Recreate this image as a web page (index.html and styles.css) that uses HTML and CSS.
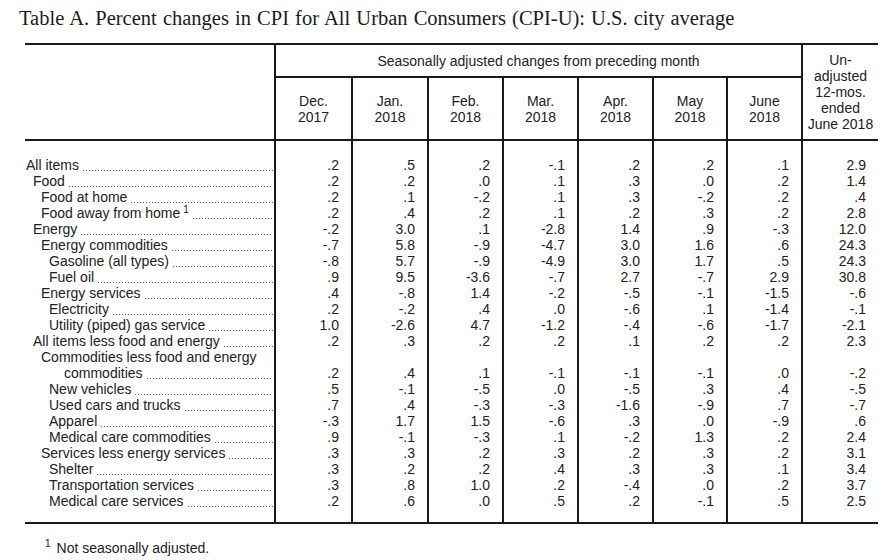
FILE: index.html
```html
<!DOCTYPE html>
<html lang="en">
<head>
<meta charset="utf-8">
<title>Table A. Percent changes in CPI</title>
<link rel="stylesheet" href="styles.css">
</head>
<body>
<div class="page">
  <h1 class="title">Table A. Percent changes in CPI for All Urban Consumers (CPI-U): U.S. city average</h1>

  <div class="cpi">
    <div class="head">
      <div class="h-stub"></div>
      <div class="h-group">Seasonally adjusted changes from preceding month</div>
      <div class="h-unadj">Un-<br>adjusted<br>12-mos.<br>ended<br>June 2018</div>
      <div class="h-mo">Dec.<br>2017</div>
      <div class="h-mo">Jan.<br>2018</div>
      <div class="h-mo">Feb.<br>2018</div>
      <div class="h-mo">Mar.<br>2018</div>
      <div class="h-mo">Apr.<br>2018</div>
      <div class="h-mo">May<br>2018</div>
      <div class="h-mo">June<br>2018</div>
    </div>

    <div class="row first">
      <div class="stub l0"><span>All items</span><i class="lead"></i></div>
      <div class="num">.2</div><div class="num">.5</div><div class="num">.2</div><div class="num">-.1</div><div class="num">.2</div><div class="num">.2</div><div class="num">.1</div><div class="num">2.9</div>
    </div>
    <div class="row">
      <div class="stub l1"><span>Food</span><i class="lead"></i></div>
      <div class="num">.2</div><div class="num">.2</div><div class="num">.0</div><div class="num">.1</div><div class="num">.3</div><div class="num">.0</div><div class="num">.2</div><div class="num">1.4</div>
    </div>
    <div class="row">
      <div class="stub l2"><span>Food at home</span><i class="lead"></i></div>
      <div class="num">.2</div><div class="num">.1</div><div class="num">-.2</div><div class="num">.1</div><div class="num">.3</div><div class="num">-.2</div><div class="num">.2</div><div class="num">.4</div>
    </div>
    <div class="row">
      <div class="stub l2"><span>Food away from home<sup class="fn">1</sup></span><i class="lead"></i></div>
      <div class="num">.2</div><div class="num">.4</div><div class="num">.2</div><div class="num">.1</div><div class="num">.2</div><div class="num">.3</div><div class="num">.2</div><div class="num">2.8</div>
    </div>
    <div class="row">
      <div class="stub l1"><span>Energy</span><i class="lead"></i></div>
      <div class="num">-.2</div><div class="num">3.0</div><div class="num">.1</div><div class="num">-2.8</div><div class="num">1.4</div><div class="num">.9</div><div class="num">-.3</div><div class="num">12.0</div>
    </div>
    <div class="row">
      <div class="stub l2"><span>Energy commodities</span><i class="lead"></i></div>
      <div class="num">-.7</div><div class="num">5.8</div><div class="num">-.9</div><div class="num">-4.7</div><div class="num">3.0</div><div class="num">1.6</div><div class="num">.6</div><div class="num">24.3</div>
    </div>
    <div class="row">
      <div class="stub l3"><span>Gasoline (all types)</span><i class="lead"></i></div>
      <div class="num">-.8</div><div class="num">5.7</div><div class="num">-.9</div><div class="num">-4.9</div><div class="num">3.0</div><div class="num">1.7</div><div class="num">.5</div><div class="num">24.3</div>
    </div>
    <div class="row">
      <div class="stub l3"><span>Fuel oil</span><i class="lead"></i></div>
      <div class="num">.9</div><div class="num">9.5</div><div class="num">-3.6</div><div class="num">-.7</div><div class="num">2.7</div><div class="num">-.7</div><div class="num">2.9</div><div class="num">30.8</div>
    </div>
    <div class="row">
      <div class="stub l2"><span>Energy services</span><i class="lead"></i></div>
      <div class="num">.4</div><div class="num">-.8</div><div class="num">1.4</div><div class="num">-.2</div><div class="num">-.5</div><div class="num">-.1</div><div class="num">-1.5</div><div class="num">-.6</div>
    </div>
    <div class="row">
      <div class="stub l3"><span>Electricity</span><i class="lead"></i></div>
      <div class="num">.2</div><div class="num">-.2</div><div class="num">.4</div><div class="num">.0</div><div class="num">-.6</div><div class="num">.1</div><div class="num">-1.4</div><div class="num">-.1</div>
    </div>
    <div class="row">
      <div class="stub l3"><span>Utility (piped) gas service</span><i class="lead"></i></div>
      <div class="num">1.0</div><div class="num">-2.6</div><div class="num">4.7</div><div class="num">-1.2</div><div class="num">-.4</div><div class="num">-.6</div><div class="num">-1.7</div><div class="num">-2.1</div>
    </div>
    <div class="row">
      <div class="stub l1"><span>All items less food and energy</span><i class="lead"></i></div>
      <div class="num">.2</div><div class="num">.3</div><div class="num">.2</div><div class="num">.2</div><div class="num">.1</div><div class="num">.2</div><div class="num">.2</div><div class="num">2.3</div>
    </div>
    <div class="row">
      <div class="stub wrap l2">
        <div>Commodities less food and energy</div>
        <div class="cont"><span>commodities</span><i class="lead"></i></div>
      </div>
      <div class="num">.2</div><div class="num">.4</div><div class="num">.1</div><div class="num">-.1</div><div class="num">-.1</div><div class="num">-.1</div><div class="num">.0</div><div class="num">-.2</div>
    </div>
    <div class="row">
      <div class="stub l3"><span>New vehicles</span><i class="lead"></i></div>
      <div class="num">.5</div><div class="num">-.1</div><div class="num">-.5</div><div class="num">.0</div><div class="num">-.5</div><div class="num">.3</div><div class="num">.4</div><div class="num">-.5</div>
    </div>
    <div class="row">
      <div class="stub l3"><span>Used cars and trucks</span><i class="lead"></i></div>
      <div class="num">.7</div><div class="num">.4</div><div class="num">-.3</div><div class="num">-.3</div><div class="num">-1.6</div><div class="num">-.9</div><div class="num">.7</div><div class="num">-.7</div>
    </div>
    <div class="row">
      <div class="stub l3"><span>Apparel</span><i class="lead"></i></div>
      <div class="num">-.3</div><div class="num">1.7</div><div class="num">1.5</div><div class="num">-.6</div><div class="num">.3</div><div class="num">.0</div><div class="num">-.9</div><div class="num">.6</div>
    </div>
    <div class="row">
      <div class="stub l3"><span>Medical care commodities</span><i class="lead"></i></div>
      <div class="num">.9</div><div class="num">-.1</div><div class="num">-.3</div><div class="num">.1</div><div class="num">-.2</div><div class="num">1.3</div><div class="num">.2</div><div class="num">2.4</div>
    </div>
    <div class="row">
      <div class="stub l2"><span>Services less energy services</span><i class="lead"></i></div>
      <div class="num">.3</div><div class="num">.3</div><div class="num">.2</div><div class="num">.3</div><div class="num">.2</div><div class="num">.3</div><div class="num">.2</div><div class="num">3.1</div>
    </div>
    <div class="row">
      <div class="stub l3"><span>Shelter</span><i class="lead"></i></div>
      <div class="num">.3</div><div class="num">.2</div><div class="num">.2</div><div class="num">.4</div><div class="num">.3</div><div class="num">.3</div><div class="num">.1</div><div class="num">3.4</div>
    </div>
    <div class="row">
      <div class="stub l3"><span>Transportation services</span><i class="lead"></i></div>
      <div class="num">.3</div><div class="num">.8</div><div class="num">1.0</div><div class="num">.2</div><div class="num">-.4</div><div class="num">.0</div><div class="num">.2</div><div class="num">3.7</div>
    </div>
    <div class="row last">
      <div class="stub l3"><span>Medical care services</span><i class="lead"></i></div>
      <div class="num">.2</div><div class="num">.6</div><div class="num">.0</div><div class="num">.5</div><div class="num">.2</div><div class="num">-.1</div><div class="num">.5</div><div class="num">2.5</div>
    </div>
  </div>

  <p class="footnote"><sup class="fn-mark">1</sup>Not seasonally adjusted.</p>
</div>
</body>
</html>
```

FILE: styles.css
```css
* {
  box-sizing: border-box;
}

html, body {
  margin: 0;
  background: #ffffff;
}

body {
  font-family: "Liberation Sans", Arial, sans-serif;
  font-size: 14px;
  line-height: 16px;
  color: #222222;
}

.page {
  width: 890px;
  height: 560px;
  padding-top: 6px;
  overflow: hidden;
}

.title {
  margin: 0 0 13px 19px;
  font-family: "Liberation Serif", "Times New Roman", serif;
  font-weight: normal;
  font-size: 20.5px;
  word-spacing: 1px;
  line-height: 24px;
  color: #1c1c1c;
  white-space: nowrap;
}

.cpi {
  --cols: 249px 77px 76px 75px 75px 75px 74px 75px 77px;
  --rule: 2px solid #1a1a1a;
  width: 853px;
  margin-left: 25px;
  border-top: var(--rule);
  border-bottom: var(--rule);
}

/* header */
.head {
  display: grid;
  grid-template-columns: var(--cols);
  grid-template-rows: 33px 63px;
}

.h-stub {
  grid-row: 1 / 3;
  grid-column: 1;
  border-bottom: var(--rule);
}

.h-group {
  grid-row: 1;
  grid-column: 2 / 9;
  border-left: var(--rule);
  border-bottom: var(--rule);
  display: flex;
  align-items: center;
  justify-content: center;
}

.h-unadj {
  grid-row: 1 / 3;
  grid-column: 9;
  border-left: var(--rule);
  border-bottom: var(--rule);
  display: flex;
  align-items: center;
  justify-content: center;
  text-align: center;
}

.h-mo {
  grid-row: 2;
  border-left: var(--rule);
  border-bottom: var(--rule);
  display: flex;
  align-items: center;
  justify-content: center;
  text-align: center;
}

/* body rows */
.row {
  display: grid;
  grid-template-columns: var(--cols);
}

.row.first > div {
  padding-top: 16px;
}

.row.last > div {
  padding-bottom: 13px;
}

.stub {
  display: flex;
  align-items: flex-end;
  padding-right: 1px;
  white-space: nowrap;
}

.stub.wrap {
  display: block;
}

.cont {
  display: flex;
  align-items: flex-end;
  padding-left: 23px;
}

.l0 { padding-left: 1px; }
.l1 { padding-left: 8px; }
.l2 { padding-left: 16px; }
.l3 { padding-left: 24px; }

.lead {
  flex: 1;
  height: 1px;
  margin: 0 0 2px 4px;
  background-image: linear-gradient(to right, #666666 0, #666666 1px, transparent 1px);
  background-size: 3px 1px;
  background-repeat: repeat-x;
}

.fn {
  font-size: 10px;
  line-height: 0;
  vertical-align: 5px;
  margin-left: 3px;
}

.num {
  border-left: var(--rule);
  display: flex;
  align-items: flex-end;
  justify-content: flex-end;
  padding-right: 12px;
}

/* footnote */
.footnote {
  margin: 16px 0 0 45px;
  line-height: 16px;
}

.fn-mark {
  font-size: 10px;
  line-height: 0;
  vertical-align: 6px;
  margin-right: 6px;
}
```
